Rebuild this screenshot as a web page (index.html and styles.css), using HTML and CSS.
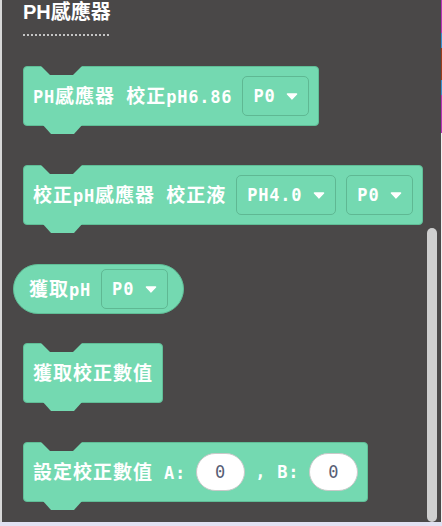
FILE: index.html
```html
<!DOCTYPE html>
<html lang="zh-Hant">
<head>
<meta charset="utf-8">
<title>PH感應器</title>
<link rel="stylesheet" href="styles.css">
</head>
<body>
<div class="screen">
  <div class="edge-left"></div>
  <main class="workspace">
    <div class="category">
      <h1 class="category-title">PH感應器</h1>
      <div class="category-rule"></div>
    </div>

    <div class="block stack gap-first">
      <span class="label">PH<span class="cjk">感應器</span> <span class="cjk">校正</span>pH6.86</span>
      <span class="dropdown"><span class="dd-text">P0</span><svg class="caret" width="12" height="7" viewBox="0 0 12 7"><path d="M1.5 1 H10.5 L6 5.8 Z" fill="#fff" stroke="#fff" stroke-width="1.6" stroke-linejoin="round"/></svg></span>
    </div>

    <div class="block stack gap-40">
      <span class="label"><span class="cjk">校正</span>pH<span class="cjk">感應器</span> <span class="cjk">校正液</span></span>
      <span class="dropdown"><span class="dd-text">PH4.0</span><svg class="caret" width="12" height="7" viewBox="0 0 12 7"><path d="M1.5 1 H10.5 L6 5.8 Z" fill="#fff" stroke="#fff" stroke-width="1.6" stroke-linejoin="round"/></svg></span>
      <span class="dropdown"><span class="dd-text">P0</span><svg class="caret" width="12" height="7" viewBox="0 0 12 7"><path d="M1.5 1 H10.5 L6 5.8 Z" fill="#fff" stroke="#fff" stroke-width="1.6" stroke-linejoin="round"/></svg></span>
    </div>

    <div class="block reporter gap-40">
      <span class="label"><span class="cjk">獲取</span>pH</span>
      <span class="dropdown"><span class="dd-text">P0</span><svg class="caret" width="12" height="7" viewBox="0 0 12 7"><path d="M1.5 1 H10.5 L6 5.8 Z" fill="#fff" stroke="#fff" stroke-width="1.6" stroke-linejoin="round"/></svg></span>
    </div>

    <div class="block stack gap-29">
      <span class="label"><span class="cjk">獲取校正數值</span></span>
    </div>

    <div class="block stack gap-40">
      <span class="label"><span class="cjk">設定校正數值</span> A:</span>
      <span class="field">0</span>
      <span class="label">, B:</span>
      <span class="field">0</span>
    </div>

    <div class="scrollbar"></div>
  </main>
  <div class="edge-right">
    <span class="seg seg-magenta seg-33"></span>
    <span class="seg seg-blue seg-15"></span>
    <span class="seg seg-brown seg-32"></span>
    <span class="seg seg-blue seg-15"></span>
    <span class="seg seg-magenta seg-38"></span>
    <span class="seg seg-light seg-rest"></span>
  </div>
</div>
<div class="bottom-strip"></div>
</body>
</html>
```

FILE: styles.css
```css
* { box-sizing: border-box; }

html, body {
  margin: 0;
  padding: 0;
  width: 442px;
  height: 526px;
  overflow: hidden;
  background: #4a4848;
}

.screen {
  display: flex;
  height: 522px;
}

.edge-left {
  width: 2px;
  flex: 0 0 2px;
  background: #d8d8d8;
}

.workspace {
  position: relative;
  flex: 1 1 auto;
  background: #4a4848;
  padding-left: 21px;
  display: flex;
  flex-direction: column;
  align-items: flex-start;
  border-bottom-right-radius: 4px;
}

.edge-right {
  width: 1px;
  flex: 0 0 1px;
  display: flex;
  flex-direction: column;
}

.seg { display: block; width: 1px; }
.seg-magenta { background: #b832b8; }
.seg-blue { background: #3a8fd0; }
.seg-brown { background: #9c3c1c; }
.seg-light { background: #efefef; }
.seg-33 { height: 33px; }
.seg-15 { height: 15px; }
.seg-32 { height: 32px; }
.seg-38 { height: 38px; }
.seg-rest { flex: 1 1 auto; }

.bottom-strip {
  height: 4px;
  background: #e1e1f2;
}

/* category header */
.category {
  display: flex;
  flex-direction: column;
  align-items: flex-start;
}

.category-title {
  margin: 0;
  font-family: "Liberation Sans", "Noto Sans CJK TC", sans-serif;
  font-weight: bold;
  font-size: 20px;
  line-height: 24px;
  color: #ffffff;
}

.category-rule {
  align-self: stretch;
  margin-top: 10px;
  height: 2px;
  background: repeating-linear-gradient(90deg, #c4c4c4 0 2px, transparent 2px 4px);
}

/* blocks */
.block {
  position: relative;
  display: flex;
  align-items: center;
  gap: 10px;
  background: #74d9b1;
  border: 1px solid #60be97;
  color: #ffffff;
  font-family: "DejaVu Sans Mono", "Noto Sans CJK TC", monospace;
  font-weight: bold;
  font-size: 17px;
  letter-spacing: 0.8px;
  white-space: pre;
}

.cjk {
  font-family: "Noto Sans CJK TC", sans-serif;
  font-size: 19px;
  letter-spacing: 1px;
}

.stack {
  min-height: 60px;
  padding: 0 9px;
  border-radius: 4px;
}

.stack::before {
  content: "";
  position: absolute;
  top: -1px;
  left: 17px;
  width: 41px;
  height: 9px;
  background: #4a4848;
  clip-path: polygon(0 0, 100% 0, 78% 100%, 22% 100%);
}

.stack::after {
  content: "";
  position: absolute;
  top: calc(100% - 1px);
  left: 18px;
  width: 41px;
  height: 10px;
  background: #74d9b1;
  clip-path: polygon(0 0, 100% 0, 78% 100%, 22% 100%);
}

.reporter {
  margin-left: -10px;
  height: 50px;
  padding: 0 15px;
  border-radius: 25px;
}

.gap-first { margin-top: 30px; }
.gap-40 { margin-top: 39px; }
.gap-29 { margin-top: 29px; }

.label { line-height: 24px; }

.dropdown {
  display: flex;
  align-items: center;
  gap: 11px;
  height: 40px;
  padding: 0 10px;
  border: 1px solid #5fb893;
  border-radius: 5px;
}

.caret { display: block; }

.field {
  display: flex;
  align-items: center;
  justify-content: center;
  width: 49px;
  height: 38px;
  background: #ffffff;
  border: 1px solid #c9c9c9;
  border-radius: 19px;
  color: #575e75;
  font-weight: normal;
}

.scrollbar {
  position: absolute;
  top: 228px;
  right: 4px;
  width: 10px;
  height: 294px;
  border-radius: 5px;
  background: #cfcfcf;
}
```
